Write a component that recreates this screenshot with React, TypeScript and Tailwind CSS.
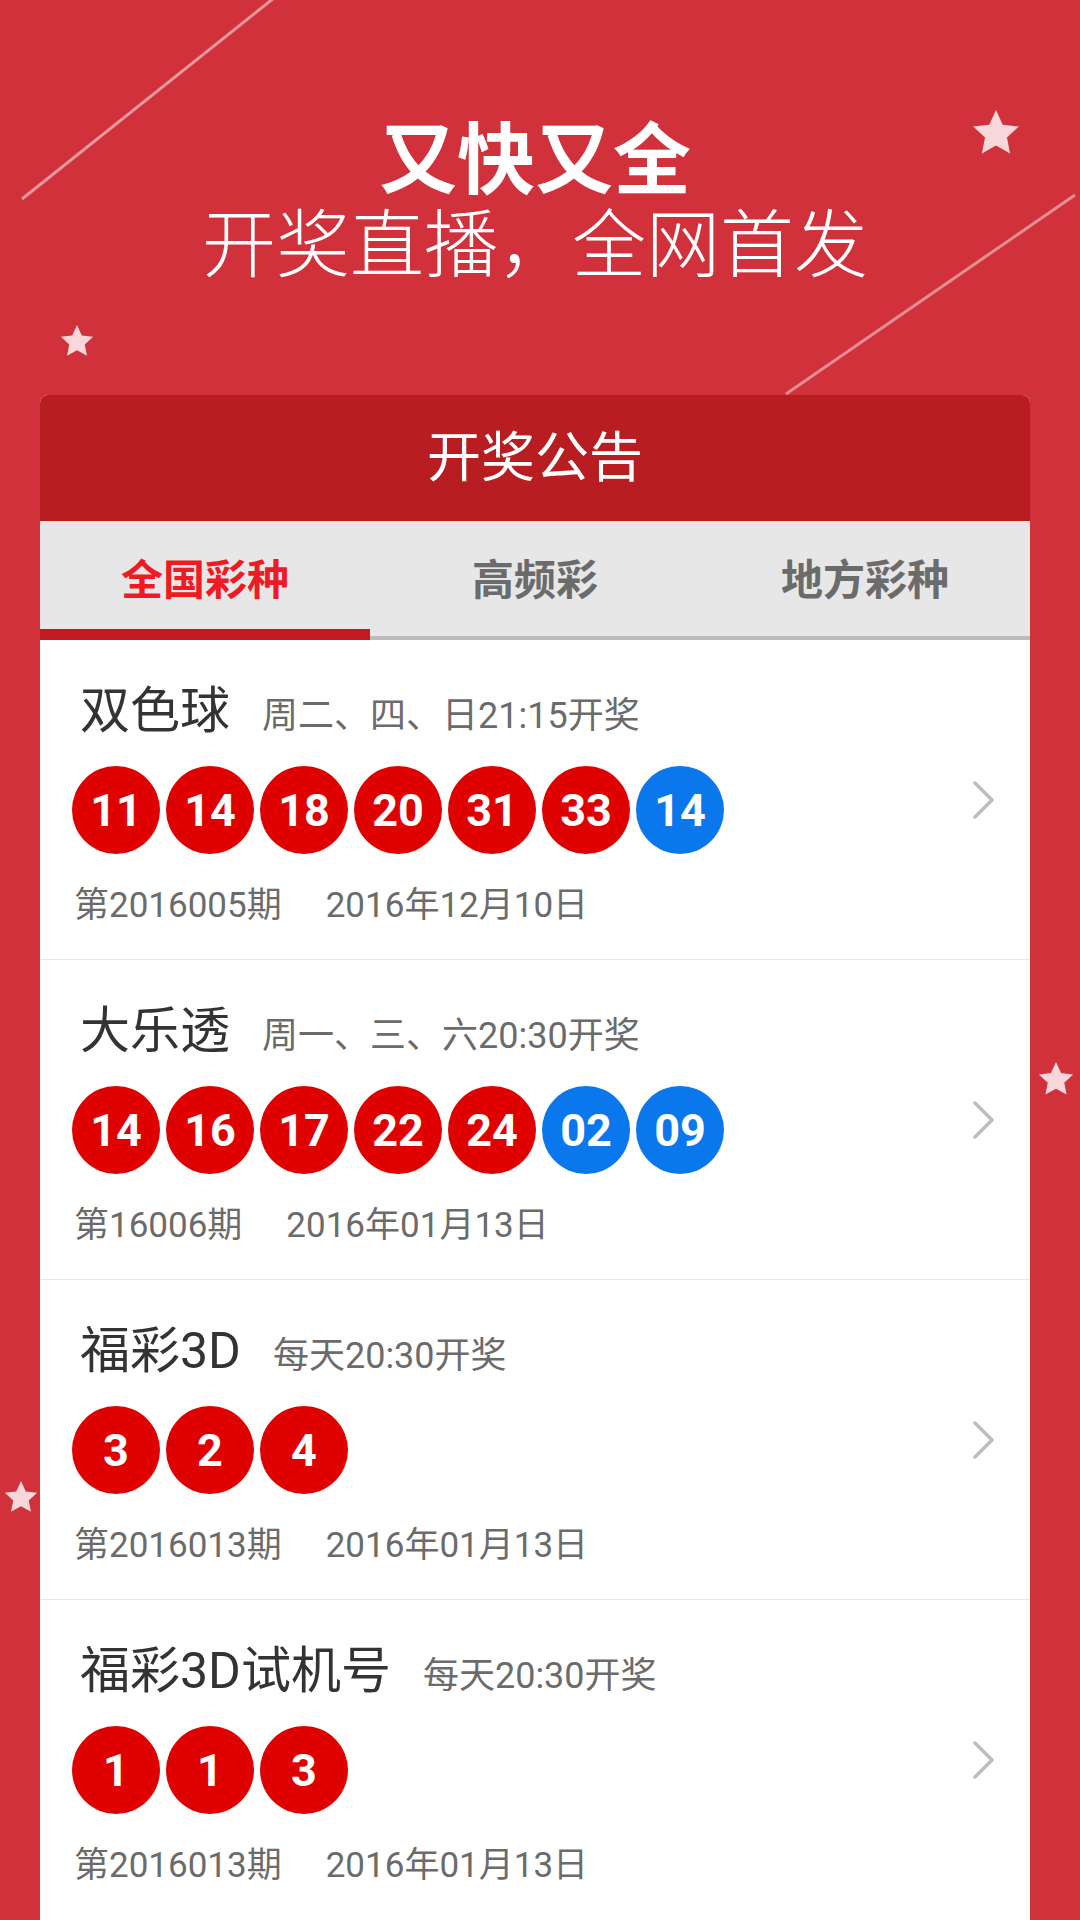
import React from "react";

const FONT = { fontFamily: "Roboto, 'Noto Sans CJK SC', sans-serif" } as const;

function starPoints(cx: number, cy: number, R: number, ratio = 0.48) {
  const pts: string[] = [];
  for (let i = 0; i < 10; i++) {
    const r = i % 2 === 0 ? R : R * ratio;
    const a = -Math.PI / 2 + (i * Math.PI) / 5;
    pts.push(`${(cx + r * Math.cos(a)).toFixed(2)},${(cy + r * Math.sin(a)).toFixed(2)}`);
  }
  return pts.join(" ");
}

type Lottery = {
  name: string;
  schedule: string;
  reds: string[];
  blues: string[];
  issue: string;
  date: string;
};

const data: Lottery[] = [
  {
    name: "双色球",
    schedule: "周二、四、日21:15开奖",
    reds: ["11", "14", "18", "20", "31", "33"],
    blues: ["14"],
    issue: "第2016005期",
    date: "2016年12月10日",
  },
  {
    name: "大乐透",
    schedule: "周一、三、六20:30开奖",
    reds: ["14", "16", "17", "22", "24"],
    blues: ["02", "09"],
    issue: "第16006期",
    date: "2016年01月13日",
  },
  {
    name: "福彩3D",
    schedule: "每天20:30开奖",
    reds: ["3", "2", "4"],
    blues: [],
    issue: "第2016013期",
    date: "2016年01月13日",
  },
  {
    name: "福彩3D试机号",
    schedule: "每天20:30开奖",
    reds: ["1", "1", "3"],
    blues: [],
    issue: "第2016013期",
    date: "2016年01月13日",
  },
];

function Ball({ n, blue }: { n: string; blue?: boolean }) {
  return (
    <div
      className={`w-[88px] h-[88px] rounded-full flex items-center justify-center text-white font-bold text-[45px] leading-none ${
        blue ? "bg-[#0a78ec]" : "bg-[#df0000]"
      }`}
    >
      {n}
    </div>
  );
}

function Row({ item, last }: { item: Lottery; last: boolean }) {
  return (
    <div
      className={`h-[320px] flex items-center pl-[32px] pr-[34px] ${
        last ? "" : "border-b border-[#e6e6e6]"
      }`}
    >
      <div className="flex-1 flex flex-col self-stretch pt-[46px]">
        <div className="flex items-baseline pl-[8px] h-[50px]">
          <span className="text-[50px] leading-[50px] text-[#333333]">{item.name}</span>
          <span className="ml-[32px] text-[36px] leading-[50px] text-[#6b6b6b]">{item.schedule}</span>
        </div>
        <div className="flex gap-[6px] mt-[30px]">
          {item.reds.map((n, i) => (
            <Ball key={"r" + i} n={n} />
          ))}
          {item.blues.map((n, i) => (
            <Ball key={"b" + i} n={n} blue />
          ))}
        </div>
        <div className="flex mt-[32px] pl-[2px] h-[40px] items-center text-[35px] leading-[40px] text-[#6b6b6b]">
          <span>{item.issue}</span>
          <span className="ml-[44px]">{item.date}</span>
        </div>
      </div>
      <svg width="24" height="38" viewBox="0 0 24 38" className="shrink-0">
        <polyline
          points="3,2 20,19 3,36"
          fill="none"
          stroke="#bdbdbd"
          strokeWidth="3.5"
          strokeLinecap="round"
          strokeLinejoin="round"
        />
      </svg>
    </div>
  );
}

export default function App() {
  const tabs = ["全国彩种", "高频彩", "地方彩种"];
  return (
    <div className="relative w-[1080px] h-[1920px] overflow-hidden bg-[#d0313b]" style={FONT}>
      <svg
        className="absolute inset-0 pointer-events-none"
        width="1080"
        height="1920"
        viewBox="0 0 1080 1920"
      >
        <line x1="274" y1="-2" x2="22" y2="199" stroke="rgba(255,255,255,0.5)" strokeWidth="3" />
        <line x1="1075" y1="195" x2="786" y2="394" stroke="rgba(255,255,255,0.45)" strokeWidth="3" />
        <polygon points={starPoints(996, 134, 24)} fill="#f7d7da" />
        <polygon points={starPoints(77, 342, 17)} fill="#f7d7da" />
        <polygon points={starPoints(1056, 1080, 18)} fill="#f7d7da" />
        <polygon points={starPoints(21, 1498, 17)} fill="#f7d7da" />
      </svg>

      <div className="relative flex flex-col h-full pl-[40px] pr-[50px]">
        <div className="flex flex-col items-center pt-[122px] text-white">
          <div className="text-[78px] leading-[80px] font-bold">又快又全</div>
          <div className="mt-[6px] text-[74px] leading-[76px] font-light">开奖直播，全网首发</div>
        </div>

        <div className="mt-[111px] flex-1 flex flex-col bg-white rounded-t-[8px] overflow-hidden">
          <div className="h-[133px] bg-[#b81e21] flex items-center justify-center text-white text-[54px]">
            开奖公告
          </div>
          <div className="bg-[#e7e7e7]">
            <div className="flex h-[108px] pt-[10px]">
              {tabs.map((t, i) => (
                <div
                  key={t}
                  className={`flex-1 flex items-center justify-center text-[42px] font-bold ${
                    i === 0 ? "text-[#ee1b24]" : "text-[#6b6b6b]"
                  }`}
                >
                  {t}
                </div>
              ))}
            </div>
            <div className="flex h-[11px]">
              <div className="w-1/3 bg-[#c21a20]" />
              <div className="flex-1 flex flex-col justify-end">
                <div className="h-[4px] bg-[#bcbcbc]" />
              </div>
            </div>
          </div>
          <div className="flex-1 flex flex-col">
            {data.map((d, i) => (
              <Row key={d.name} item={d} last={i === data.length - 1} />
            ))}
          </div>
        </div>
      </div>
    </div>
  );
}
